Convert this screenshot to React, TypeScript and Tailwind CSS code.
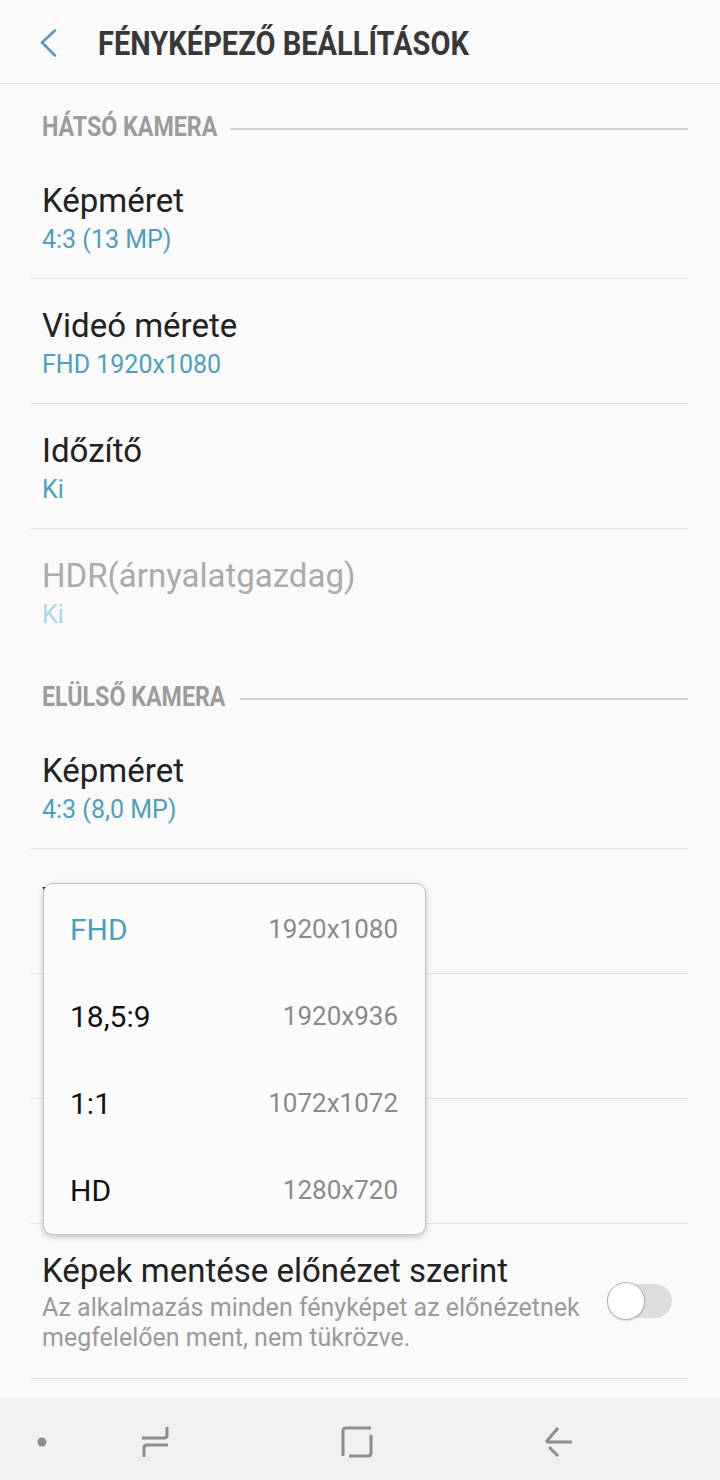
import React from "react";

const font = { fontFamily: "Roboto, 'Noto Sans', sans-serif" };

interface RowProps {
    title?: string;
    sub?: string;
    disabled?: boolean;
    last?: boolean;
    top?: string;
}

const Row = ({ title, sub, disabled, last, top = "pt-[28px]" }: RowProps) => (
    <div className={`ml-[31px] mr-[32px] h-[125px] pl-[11px] ${top} ${last ? "" : "border-b border-[#e4e4e4]"}`}>
        <div className={`h-[38px] text-[33px] leading-[38px] ${disabled ? "text-[#ababab]" : "text-[#222222]"}`}>{title}</div>
        <div className={`text-[25px] leading-[39px] ${disabled ? "text-[#acd4e2]" : "text-[#4e9fbe]"}`}>{sub}</div>
    </div>
);

const Section = ({ label, width }: { label: string; width: string }) => (
    <div className="flex h-[70px] items-center pl-[42px] pr-[32px] pt-[20px]">
        <div className={`${width} shrink-0 overflow-visible whitespace-nowrap leading-[30px]`}>
            <span className="inline-block origin-left scale-x-[0.86] text-[27px] font-bold text-[#9c9c9c]">{label}</span>
        </div>
        <div className="h-[2px] flex-1 bg-[#d3d3d3]" />
    </div>
);

const options = [
    { name: "FHD", res: "1920x1080", active: true },
    { name: "18,5:9", res: "1920x936" },
    { name: "1:1", res: "1072x1072" },
    { name: "HD", res: "1280x720" },
];

export default function App() {
    return (
        <div className="relative h-[1480px] w-[720px] overflow-hidden bg-[#fafafa]" style={font}>
            <header className="flex h-[84px] items-center border-b border-[#e6e6e6] pl-[32px]">
                <svg width="30" height="40" viewBox="0 0 30 40" fill="none">
                    <path d="M23 8.5 L10 20.5 L23 33.5" stroke="#4e9fbe" strokeWidth="2.6" strokeLinecap="round" strokeLinejoin="round" />
                </svg>
                <div className="ml-[36px] mt-[4px] whitespace-nowrap">
                    <span className="inline-block origin-left scale-x-[0.88] text-[33px] font-bold text-[#383838]">
                        FÉNYKÉPEZŐ BEÁLLÍTÁSOK
                    </span>
                </div>
            </header>

            <Section label="HÁTSÓ KAMERA" width="w-[188px]" />
            <Row title="Képméret" sub="4:3 (13 MP)" />
            <Row title="Videó mérete" sub="FHD 1920x1080" />
            <Row title="Időzítő" sub="Ki" />
            <Row title="HDR(árnyalatgazdag)" sub="Ki" disabled last />

            <Section label="ELÜLSŐ KAMERA" width="w-[198px]" />
            <Row title="Képméret" sub="4:3 (8,0 MP)" />
            <Row title="Videó mérete" top="pt-[32px]" />
            <Row />
            <Row />

            <div className="ml-[31px] mr-[32px] flex h-[155px] items-center border-b border-[#e4e4e4] pl-[11px]">
                <div className="flex-1 self-start pt-[28px]">
                    <div className="text-[33px] leading-[38px] text-[#222222]">Képek mentése előnézet szerint</div>
                    <div className="mt-[3px] text-[25px] leading-[30px] text-[#9a9a9a]">
                        Az alkalmazás minden fényképet az előnézetnek
                        <br />
                        megfelelően ment, nem tükrözve.
                    </div>
                </div>
                <div className="relative mr-[16px] h-[38px] w-[65px] shrink-0">
                    <div className="absolute right-0 top-[2px] h-[34px] w-[60px] rounded-full bg-[#dddddd]" />
                    <div className="absolute left-0 top-0 h-[38px] w-[38px] rounded-full border-[1.5px] border-[#b3b3b3] bg-white shadow-[0_1px_2px_rgba(0,0,0,0.15)]" />
                </div>
            </div>

            <nav className="mt-[19px] flex h-[84px] items-center bg-[#f0f0f0] pl-[12px] pt-[4px]">
                <svg width="60" height="60" viewBox="0 0 60 60">
                    <circle cx="30" cy="30" r="4.5" fill="#8c8c8c" />
                </svg>
                <svg width="60" height="60" viewBox="0 0 60 60" fill="none" className="ml-[53px]">
                    <path d="M42 15 V23 Q42 26 39 26 H17" stroke="#8c8c8c" strokeWidth="3" />
                    <path d="M43 33 H22 Q19 33 19 36 V45" stroke="#8c8c8c" strokeWidth="3" />
                </svg>
                <svg width="60" height="60" viewBox="0 0 60 60" fill="none" className="ml-[142px]">
                    <path d="M44 16 H19 Q16 16 16 19 V44" stroke="#8c8c8c" strokeWidth="3" />
                    <path d="M44 23 V41 Q44 44 41 44 H22" stroke="#8c8c8c" strokeWidth="3" />
                </svg>
                <svg width="60" height="60" viewBox="0 0 60 60" fill="none" className="ml-[142px]">
                    <path d="M17 30 H43" stroke="#8c8c8c" strokeWidth="3" />
                    <path d="M17 30 L29 16" stroke="#8c8c8c" strokeWidth="3" />
                    <path d="M20 35 L29 44" stroke="#8c8c8c" strokeWidth="3" />
                </svg>
            </nav>

            <div className="absolute left-[43px] top-[883px] w-[383px] rounded-[10px] border border-[#c4c4c4] bg-[#fcfcfc] pt-[2px] shadow-[0_2px_6px_rgba(0,0,0,0.22)]">
                {options.map((o) => (
                    <div key={o.name} className="flex h-[87px] items-center justify-between pl-[26px] pr-[27px]">
                        <span className={`text-[30px] ${o.active ? "text-[#4e9fbe]" : "text-[#111111]"}`}>{o.name}</span>
                        <span className="text-[26px] text-[#8a8a8a]">{o.res}</span>
                    </div>
                ))}
            </div>
        </div>
    );
}
